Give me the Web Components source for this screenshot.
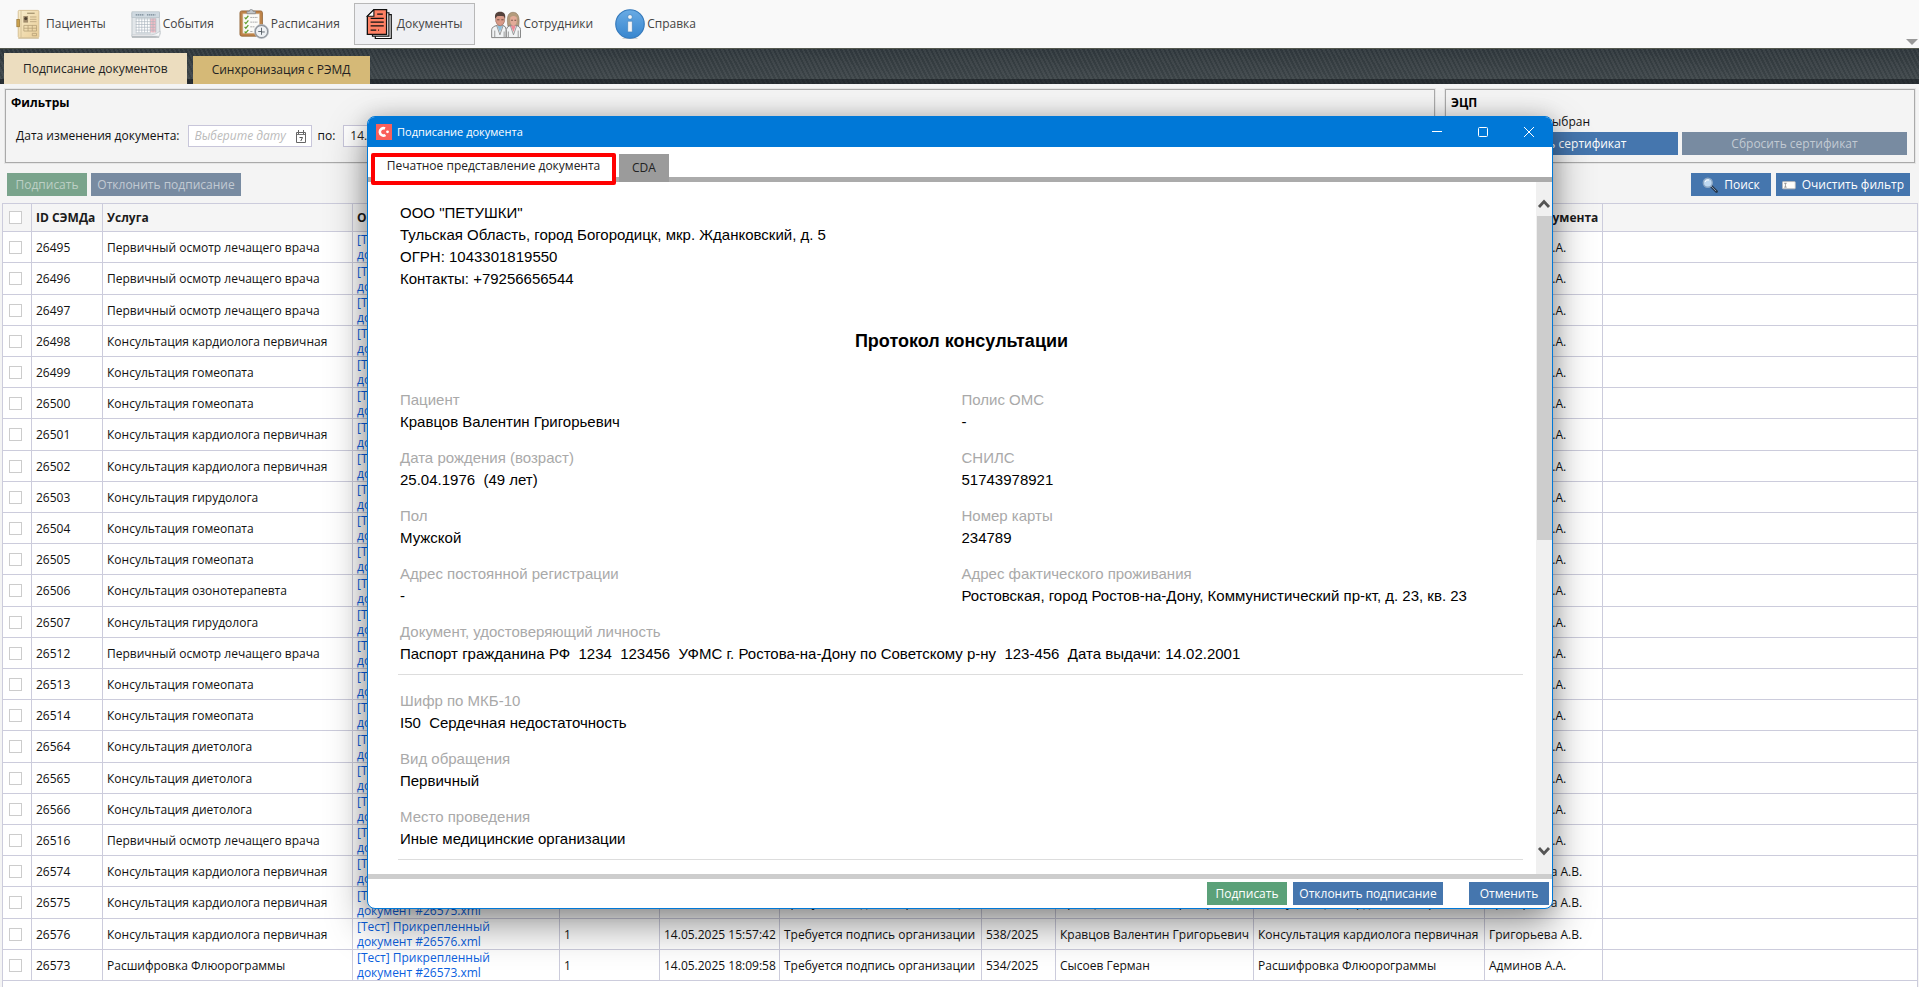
<!DOCTYPE html>
<html lang="ru">
<head>
<meta charset="utf-8">
<title>Подписание документов</title>
<style>
html, body { height: 100%; margin: 0; }
body { font: 12px/16px "Open Sans", "Noto Sans", sans-serif; color: #111; background: #f4f4f4; overflow: hidden; }
</style>
</head>
<body>
<med-app></med-app>

<script>
const define = (name, html, init) => {
  const template = document.createElement('template');
  template.innerHTML = `<style>*{box-sizing:border-box}button,input{font:inherit}</style>${html}`;
  customElements.define(name, class extends HTMLElement {
    connectedCallback() {
      if (this.shadowRoot) return;
      const root = this.attachShadow({ mode: 'open' });
      root.append(template.content.cloneNode(true));
      if (init) init(this, root);
    }
  });
};

const icons = {
  card: `<svg viewBox="0 0 32 32"><defs><linearGradient id="a" x2="1" y2="1"><stop stop-color="#f8edcd"/><stop offset="1" stop-color="#e9cd97"/></linearGradient></defs><rect x="4.500" y="1.500" width="22" height="29" rx="1" fill="url(#a)" stroke="#d5bf92"/><path d="M7.500 2v28M4.500 31.500h22" stroke="#c9b58b" opacity=".7"/><rect x="3" y="11" width="3" height="8" fill="#caa24f" stroke="#8e6b2a" stroke-width=".6"/><path d="M14 4.500h8" stroke="#8b7a58"/><rect x="10" y="7.500" width="5" height="7" fill="#a08b6c"/><circle cx="12.500" cy="10" r="1.600" fill="#4d4030"/><path d="M17 8.500h7M17 11h7M17 13.500h7M10.500 17.500h13.500v6h-13.500zM10.500 20.500H24M15 17.500v6M19.500 17.500v6M19.500 26h4.500v2.500h-4.500z" fill="none" stroke="#b39e75" stroke-width=".8"/></svg>`,
  calendar: `<svg viewBox="0 0 32 32"><path d="M1 4h29l1 23-5 2.500H1z" fill="#e3e7ea" stroke="#b1b9bf" stroke-width=".8"/><rect x="1" y="3" width="29.500" height="6" fill="#cfd9e0" stroke="#abb6bd" stroke-width=".6"/><path d="M5 6.200h9M17 6.200h9" stroke="#748592" stroke-width="1.300" stroke-dasharray="1.500 .6"/><path d="M5 10h20v15H5z" fill="#fff"/><path d="M20.500 10h6v15h-6z" fill="#f4bcc4"/><path d="M5 10.500h21M5 13.500h21M5 16.500h21M5 19.500h21M5 22.500h21M5 25.500h16M5.500 10v15M8.500 10v15M11.500 10v15M14.500 10v15M17.500 10v15M20.500 10v15M23.500 10v15M26.500 10v15" stroke="#a9b4bd" stroke-width=".7"/><path d="M1 27.500h21q5 0 9-4l-.5 5.500H1z" fill="#f8f9fa" stroke="#b6bcc0" stroke-width=".6"/><path d="M1 30h29" stroke="#9aa0a4"/></svg>`,
  plan: `<svg viewBox="0 0 32 32"><path d="M1 4q0-2 2-2h20q2 0 2 2v23q0 2-2 2H3q-2 0-2-2z" fill="#bf8449" stroke="#8a5b2e" stroke-width=".8"/><path d="M4 5h18v21H4z" fill="#fbfbf8" stroke="#caa67c" stroke-width=".6"/><path d="M8.500 5V2.500h2.500Q11 .5 13 .5t2 2h2.500V5z" fill="#c3c7ca" stroke="#83888c" stroke-width=".8"/><path d="M6 9l1.300 1.500L10 7.200M6 14l1.300 1.500 2.700-3.300M6 19l1.300 1.500 2.700-3.300M6 24l1.300 1.500 2.700-3.300" fill="none" stroke="#5d9c2c" stroke-width="1.300"/><path d="M12 9h8M12 14h8M12 19h5M12 24h3" stroke="#aaa" stroke-dasharray="2 .5"/><circle cx="24" cy="24" r="6.800" fill="#eef1f4" stroke="#8e949b" stroke-width="1.800"/><circle cx="24" cy="24" r="7.600" fill="none" stroke="#c9cdd2" stroke-width=".6"/><path d="M24 20v4.500h3.500M24 24h-3.500M24 24v3.500" fill="none" stroke="#4c555e" stroke-width=".9"/></svg>`,
  docs: `<svg viewBox="0 0 32 32"><path d="M11 6h17v25.500H11z" fill="#fff" stroke="#111" stroke-width="1.300"/><path d="M8 4h17.500v25H8z" fill="#fff" stroke="#111" stroke-width="1.300"/><path d="M9.500 .7H23V27H2.500V7.700z" fill="#ff8164" stroke="#111" stroke-width="1.400"/><path d="M9.500 .7v7h-7z" fill="#fff" stroke="#111" stroke-width="1.200"/><path d="M13 5.500h6M6 10h14M6 14h14M6 18h14M6 22.500h6M14 22.500h1" stroke="#111" stroke-width="1.300"/></svg>`,
  people: `<svg viewBox="0 0 32 32"><path d="M18 18c-1.500-9 0-14.500 5.500-14.500S31 9 29.500 18z" fill="#b39b7c" stroke="#85705a" stroke-width=".6"/><path d="M.7 30.500V22q.5-3.500 6-4.500h6q3 .5 3.500 4.500v8.500z" fill="#f1f3f4" stroke="#7d7d7d"/><path d="M16.300 30.500V22q.5-3.500 4.500-4.500h6q4.500 1 4.700 4.500v8.500z" fill="#f1f3f4" stroke="#7d7d7d"/><path d="M6.500 17.500h6l-3 7z" fill="#8fc0dc"/><path d="M21 17.500h5.500l-2.500 7z" fill="#ef8a96"/><path d="M6 17.500l3.500 10 3.500-10M20.500 17.500l3.500 10 3.500-10M4 23v7M14 24v6M18.500 24v6M29 23v7" fill="none" stroke="#8a8a8a" stroke-width=".9"/><path d="M5 8q5-3 9.500 0v5q-1 4.500-4.700 5Q6 17.500 5 13z" fill="#d99a88" stroke="#8c6558" stroke-width=".6"/><path d="M20.500 9q3.500-3 7 0v4.500q-1 4-3.500 4.500-2.500-.5-3.500-4.500z" fill="#e3ab98"/><path d="M4.500 10.500C3.500 5.500 5.500 3 9.700 3s6.300 2.500 5.300 7.500L13.500 7.500h-7z" fill="#54423c"/><path d="M6.500 11.500h2.500M11 11.500h2.500M21.500 12h1.800M25 12h1.800" stroke="#5e4239" stroke-width=".9"/></svg>`,
  info: `<svg viewBox="0 0 32 32"><defs><linearGradient id="a" x2="0" y2="1"><stop stop-color="#6aabe4"/><stop offset="1" stop-color="#3786cf"/></linearGradient></defs><path d="M8 31.500h16" stroke="#ccc"/><circle cx="16" cy="16" r="15.200" fill="url(#a)" stroke="#3479bb" stroke-width="1.200"/><circle cx="16" cy="8.500" r="2.500" fill="#f5f5f5" stroke="#3b7ebd" stroke-width=".7"/><path d="M13.500 13h5v11.500h-5z" fill="#f5f5f5" stroke="#3b7ebd" stroke-width=".7"/></svg>`,
  search: `<svg viewBox="0 0 16 16"><path d="M9 9l5.500 5.500" stroke="#28384b" stroke-width="2.800" stroke-linecap="round"/><path d="M9 9l5 5" stroke="#8395aa"/><circle cx="5.800" cy="5.800" r="4.500" fill="#bfd9f1" stroke="#8ca7c4" stroke-width="1.400"/><path d="M3 5q1-3 4-2" stroke="#fff" fill="none"/></svg>`,
  eraser: `<svg viewBox="0 0 16 16"><rect x=".500" y="4" width="15" height="8.500" rx="1" fill="#fffefa" stroke="#b5b6b6"/><path d="M2.500 6h3M4 6v4.500M2.500 10.500h3" stroke="#777" stroke-width=".8"/></svg>`
};

/* Main toolbar entry: icon and caption */
define('tool-button', `<style>
:host{display:block}
button{display:flex;align-items:center;gap:2px;height:42px;padding:0 8px 0 10px;border:1px solid transparent;background:none;color:#444;white-space:nowrap}
:host([active]) button{background:#eff0f3;border-color:#b8b8b8;padding-right:12px}
:host([compact]) button{padding-right:5px}
.icon,svg{display:block;width:30px;height:30px}
</style><button type="button"><span class="icon"></span><slot></slot></button>`,
(host, root) => { root.querySelector('.icon').innerHTML = icons[host.getAttribute('icon')]; });

define('main-toolbar', `<style>
:host{display:flex;justify-content:space-between;background:#f9f9f9;height:48px}
nav{display:flex;gap:5px;padding:3px 3px 0}
.more{align-self:flex-end;width:12px;height:6px;margin:0 1px 3px;padding:0;border:0;background:#999;clip-path:polygon(0 0,100% 0,50% 100%)}
</style><nav aria-label="Главное меню"><slot></slot></nav><button class="more" type="button" aria-label="Ещё"></button>`);

/* Dark hatched strip that holds the page tabs */
define('tab-strip', `<style>
:host{display:flex;align-items:flex-end;gap:6px;height:36px;padding:0 4px;border-top:1px solid #55594f;
background:linear-gradient(transparent 30px,rgba(12,16,22,.5) 30px),repeating-linear-gradient(63deg,transparent 0 2px,rgba(255,255,255,.06) 2px 4px),linear-gradient(#2e363b,#3e4649)}
button{border:0;white-space:nowrap;color:#222;padding:0 19px;background:#d5b977;height:28px}
.on{height:31px;background:#ecddbf}
</style><button class="on" type="button">Подписание документов</button><button type="button">Синхронизация с РЭМД</button>`);

define('group-box', `<style>
:host{display:block;border:1px solid #aaa;outline:1px solid #e6e6e6;background:#f4f4f4;padding:4px 5px;height:74px}
h2{margin:0;font-size:12px;line-height:18px;color:#000}
</style><h2></h2><slot></slot>`,
(host, root) => { root.querySelector('h2').textContent = host.getAttribute('caption'); });

define('ui-button', `<style>
:host{display:block}
button{display:flex;align-items:center;justify-content:center;gap:6px;width:100%;min-width:80px;height:23px;padding:0 6px;border:0;background:#4576ae;color:#fff;white-space:nowrap}
:host([kind=sign]) button{background:#5ba179}
:host([disabled]) button{background:#788ba1;color:#c2cad3}
:host([disabled][kind=sign]) button{background:#7aa48c;color:#bdd0c5}
svg{display:block;width:16px;height:16px}
</style><button type="button"><slot></slot></button>`,
(host, root) => {
  const b = root.querySelector('button');
  b.disabled = host.hasAttribute('disabled');
  if (host.hasAttribute('icon')) b.insertAdjacentHTML('afterbegin', icons[host.getAttribute('icon')]);
});

define('date-field', `<style>
:host{display:flex;align-items:center;gap:8px}
label{white-space:nowrap}
.box{display:flex;align-items:center;width:124px;height:22px;border:1px solid #c8c6da;background:#fff;padding:0 4px 0 6px}
input{min-width:0;flex:1;border:0;padding:0;background:none;outline:0;color:#222}
input::placeholder{color:#bbb;font-style:italic;opacity:1}
svg{width:12px;height:13px;flex:none}
</style><label for="d"></label><span class="box"><input id="d" type="text" placeholder="Выберите дату"><svg viewBox="0 0 12 13"><path d="M1.500 2.500h9v10h-9zM3.500 0v4M8.500 0v4" fill="none" stroke="#666"/><path d="M2 4.500h8" stroke="#777"/><path d="M4.500 7.500h3L5.800 11" fill="none" stroke="#555"/></svg></span>`,
(host, root) => {
  root.querySelector('label').textContent = host.getAttribute('label');
  root.querySelector('input').value = host.getAttribute('value') || '';
});

const kard = 'Консультация кардиолога первичная', gomeo = 'Консультация гомеопата', osmotr = 'Первичный осмотр лечащего врача',
  giru = 'Консультация гирудолога', diet = 'Консультация диетолога', need = 'Требуется подпись организации';
const records = [
  [26495, osmotr], [26496, osmotr], [26497, osmotr], [26498, kard], [26499, gomeo], [26500, gomeo], [26501, kard], [26502, kard],
  [26503, giru], [26504, gomeo], [26505, gomeo], [26506, 'Консультация озонотерапевта'], [26507, giru], [26512, osmotr],
  [26513, gomeo], [26514, gomeo], [26564, diet], [26565, diet], [26566, diet], [26516, osmotr],
  [26574, kard, '', '', '', '', '', '', 'Григорьева А.В.'],
  [26575, kard, '', '', need, '', 'Кравцов Валентин Григорьевич', kard, 'Григорьева А.В.'],
  [26576, kard, '1', '14.05.2025 15:57:42', need, '538/2025', 'Кравцов Валентин Григорьевич', kard, 'Григорьева А.В.'],
  [26573, 'Расшифровка Флюорограммы', '1', '14.05.2025 18:09:58', need, '534/2025', 'Сысоев Герман', 'Расшифровка Флюорограммы', 'Админов А.А.']
];

define('document-grid', `<style>
:host{display:block;flex:1;min-height:0;margin:0 1px 0 2px;border:1px solid #ccccdc;border-bottom:0;background:#fff;overflow:hidden}
table{width:100%;table-layout:fixed;border-collapse:separate;border-spacing:0}
th,td{padding:0 4px;border:0 solid #ccccdc;border-width:0 1px 1px 0;text-align:left;white-space:nowrap;overflow:hidden}
th:last-child,td:last-child{border-right:0}
th{height:28px;background:#f5f5f5;color:#1b1b1b}
td{height:31px;line-height:15px}
tr:nth-child(5n+2) td{height:32px}
td.file{white-space:normal;padding-right:48px}
th:first-child,td:first-child{padding:0 6px}
a{color:#0b5fe0;text-decoration:none}
input{appearance:none;display:block;width:13px;height:13px;margin:0;border:1px solid #ccc;background:#fff}
</style><table><colgroup></colgroup><thead><tr></tr></thead><tbody></tbody></table>`,
(host, root) => {
  root.querySelector('colgroup').innerHTML = [29, 71, 250, 207, 100, 120, 202, 74, 198, 231, 118].map(w => `<col style="width:${w}px">`).join('') + '<col>';
  root.querySelector('thead tr').innerHTML = '<th><input type="checkbox" aria-label="Выбрать все"></th>' +
    ['ID СЭМДа', 'Услуга', 'Описание', '', '', '', '', '', '', 'Автор документа', ''].map(t => `<th>${t}</th>`).join('');
  root.querySelector('tbody').innerHTML = records.map(([id, service, n = '', date = '', state = '', card = '', patient = '', what = '', author = 'Админов А.А.']) =>
    `<tr><td><input type="checkbox" aria-label="${id}"></td><td>${id}</td><td>${service}</td><td class="file"><a href="#${id}">[Тест] Прикрепленный документ #${id}.xml</a></td>` +
    [n, date, state, card, patient, what, author, ''].map(t => `<td>${t}</td>`).join('') + '</tr>').join('');
});

/* Caption and value of the printed form */
define('doc-field', `<style>
:host{display:block;line-height:22px;white-space:pre-wrap}
span{display:block;color:#a9a9a9}
</style><span></span><slot></slot>`,
(host, root) => { root.querySelector('span').textContent = host.getAttribute('label'); });

define('printed-form', `<style>
:host{display:block;flex:1;min-width:0;overflow:hidden;padding:20px 13px 0 30px;font:15px/22px "Liberation Sans",Arial,sans-serif;color:#000}
p,h1{margin:0;padding-left:2px}
h1{font-size:18px;text-align:center;margin:40px 0 37px}
section{display:grid;grid-template-columns:1fr 1fr;gap:14px 0;padding:0 0 9px 2px;margin-bottom:15px;border-bottom:1px solid #ddd}
.wide{grid-column:1/-1}
</style>
<p>ООО "ПЕТУШКИ"</p><p>Тульская Область, город Богородицк, мкр. Жданковский, д. 5</p><p>ОГРН: 1043301819550</p><p>Контакты: +79256656544</p>
<h1>Протокол консультации</h1>
<section>
<doc-field label="Пациент">Кравцов Валентин Григорьевич</doc-field><doc-field label="Полис ОМС">-</doc-field>
<doc-field label="Дата рождения (возраст)">25.04.1976  (49 лет)</doc-field><doc-field label="СНИЛС">51743978921</doc-field>
<doc-field label="Пол">Мужской</doc-field><doc-field label="Номер карты">234789</doc-field>
<doc-field label="Адрес постоянной регистрации">-</doc-field><doc-field label="Адрес фактического проживания">Ростовская, город Ростов-на-Дону, Коммунистический пр-кт, д. 23, кв. 23</doc-field>
<doc-field class="wide" label="Документ, удостоверяющий личность">Паспорт гражданина РФ  1234  123456  УФМС г. Ростова-на-Дону по Советскому р-ну  123-456  Дата выдачи: 14.02.2001</doc-field>
</section>
<section>
<doc-field class="wide" label="Шифр по МКБ-10">I50  Сердечная недостаточность</doc-field>
<doc-field class="wide" label="Вид обращения">Первичный</doc-field>
<doc-field class="wide" label="Место проведения">Иные медицинские организации</doc-field>
</section>`);

define('scroll-bar', `<style>
:host{display:flex;flex-direction:column;width:16px;background:#f0f0f0;padding:12px 0 12px 1px}
svg{display:block;width:15px;height:22px;flex:none}
.track{flex:1}
.thumb{height:52%;background:#cdcdcd}
</style><svg viewBox="0 0 15 22"><path d="M2 13l5-5.500 5 5.500" fill="none" stroke="#555" stroke-width="2.800"/></svg>
<div class="track"><div class="thumb"></div></div>
<svg viewBox="0 0 15 22"><path d="M2 8l5 5.500L12 8" fill="none" stroke="#555" stroke-width="2.800"/></svg>`);

define('sign-dialog', `<style>
:host{display:flex;flex-direction:column;border:1px solid #0078d7;border-radius:8px;background:#fff;overflow:hidden;box-shadow:0 0 20px rgba(0,0,0,.16),0 16px 40px rgba(0,0,0,.42)}
header{display:flex;align-items:center;height:30px;flex:none;padding-left:8px;background:#0078d7;color:#fff}
.logo{width:16px;height:16px;margin-right:5px}
h1{flex:1;margin:0;font-size:11px;font-weight:400}
.win{width:46px;height:30px;padding:0;border:0;background:none;color:#fff}
.win svg{display:block;margin:auto;width:12px;height:12px}
.tabs{display:flex;align-items:flex-end;gap:3px;height:35px;flex:none;padding-left:3px;
background:linear-gradient(#ababab,#ababab) 0 100%/100% 5px no-repeat}
.tabs button{border:0;padding:0 13px;height:28px;background:#9b9b9b;color:#222}
.tabs .on{height:32px;margin-bottom:-3px;padding:0 0 7px;border:4px solid #f00;border-radius:2px;background:#fff;width:245px;white-space:nowrap;position:relative}
main{display:flex;flex:1;min-height:0}
footer{display:flex;justify-content:flex-end;gap:6px;height:34px;flex:none;padding:3px 3px 0;border-top:5px solid #cdcdcd}
.reject{width:150px}
.cancel{margin-left:20px}
</style>
<header><svg class="logo" viewBox="0 0 16 16"><path d="M0 0h16v16H0z" fill="#f9605b"/><path d="M9 4.500A3.700 3.700 0 1 0 9.500 11" fill="none" stroke="#fff" stroke-width="2.600"/><circle cx="11.500" cy="7.800" r="1.400" fill="#fff"/></svg>
<h1>Подписание документа</h1>
<button class="win" type="button" aria-label="Свернуть"><svg viewBox="0 0 12 12"><path d="M1 5.500h10" stroke="#fff"/></svg></button>
<button class="win" type="button" aria-label="Развернуть"><svg viewBox="0 0 12 12"><rect x="1.500" y="1.500" width="9" height="9" rx="1" fill="none" stroke="#fff"/></svg></button>
<button class="win" type="button" aria-label="Закрыть"><svg viewBox="0 0 12 12"><path d="M1 1l10 10M11 1L1 11" stroke="#fff"/></svg></button></header>
<div class="tabs"><button class="on" type="button">Печатное представление документа</button><button type="button">CDA</button></div>
<main><printed-form></printed-form><scroll-bar></scroll-bar></main>
<footer><ui-button kind="sign">Подписать</ui-button><ui-button class="reject">Отклонить подписание</ui-button><ui-button class="cancel">Отменить</ui-button></footer>`);

define('med-app', `<style>
:host{display:flex;flex-direction:column;height:100vh;position:relative}
.groups{display:grid;grid-template-columns:1fr 470px;gap:10px;padding:5px 4px 0 5px}
.filters{display:flex;gap:6px;padding:13px 0 0 5px}
.note{padding:2px 0 1px 4px}
.pair{display:grid;grid-template-columns:1fr 1fr;gap:4px;padding:1px 2px 0}
.actions{display:flex;gap:4px;padding:10px 9px 7px 7px}
.reject{width:150px}
.find{margin-left:auto;margin-right:1px}
.clear{width:134px}
sign-dialog{position:absolute;inset:116px 366px 78px 367px}
</style>
<main-toolbar>
<tool-button icon="card">Пациенты</tool-button><tool-button icon="calendar">События</tool-button><tool-button icon="plan">Расписания</tool-button><tool-button icon="docs" active>Документы</tool-button><tool-button icon="people" compact>Сотрудники</tool-button><tool-button icon="info">Справка</tool-button>
</main-toolbar>
<tab-strip></tab-strip>
<div class="groups">
<group-box caption="Фильтры"><div class="filters"><date-field label="Дата изменения документа:"></date-field><date-field label="по:" value="14.05.2025"></date-field></div></group-box>
<group-box caption="ЭЦП"><div class="note">Сертификат не выбран</div><div class="pair"><ui-button>Выбрать сертификат</ui-button><ui-button disabled>Сбросить сертификат</ui-button></div></group-box>
</div>
<div class="actions"><ui-button kind="sign" disabled>Подписать</ui-button><ui-button class="reject" disabled>Отклонить подписание</ui-button>
<ui-button class="find" icon="search">Поиск</ui-button><ui-button class="clear" icon="eraser">Очистить фильтр</ui-button></div>
<document-grid></document-grid>
<sign-dialog></sign-dialog>`);
</script>
</body>
</html>
